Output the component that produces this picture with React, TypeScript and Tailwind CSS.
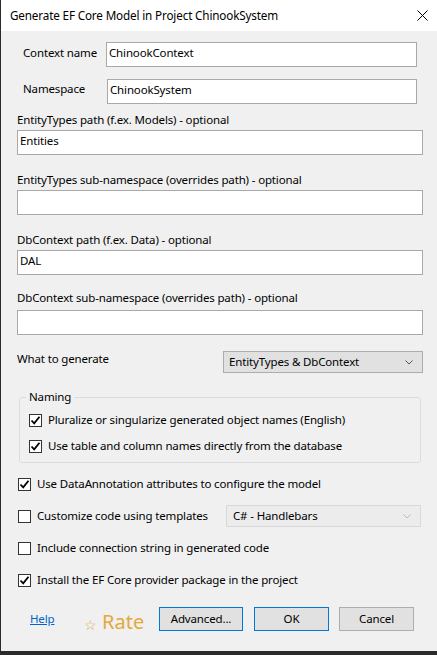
const Check = () => (
  <svg width="11" height="11" viewBox="0 0 11 11" className="block">
    <path d="M1.5 5.5 L4.2 8.3 L9.5 1.8" fill="none" stroke="#000" strokeWidth="1.8" />
  </svg>
);

const CheckBox = ({ checked }: { checked?: boolean }) => (
  <div className="w-[13px] h-[13px] border border-[#333] bg-white flex items-center justify-center shrink-0">
    {checked && <Check />}
  </div>
);

const Chevron = ({ color }: { color: string }) => (
  <svg width="8" height="5" viewBox="0 0 8 5">
    <path d="M0.5 0.5 L4 4 L7.5 0.5" fill="none" stroke={color} strokeWidth="1" />
  </svg>
);

const TextBox = ({ value, className }: { value?: string; className?: string }) => (
  <div className={`h-[25px] bg-white border border-[#a9a9a9] px-[2px] pt-[1px] leading-[17px] ${className ?? ''}`}>
    {value}
  </div>
);

const App = () => {
  return (
    <div
      className="w-[437px] h-[655px] bg-[#2b2b2b] text-[11.5px] tracking-[-0.15px] text-black"
      style={{ fontFamily: '"Noto Sans", "Open Sans", sans-serif' }}
    >
      <div className="ml-[1px] w-[436px] h-[651px] bg-[#f0f0f0] flex flex-col">
        {/* title bar */}
        <div className="h-[31px] bg-white flex items-center justify-between pl-[9px] pr-[9px] shrink-0">
          <span className="text-[11.7px]">Generate EF Core Model in Project ChinookSystem</span>
          <svg width="11" height="11" viewBox="0 0 11 11">
            <path d="M0.5 0.5 L10.5 10.5 M10.5 0.5 L0.5 10.5" stroke="#000" strokeWidth="1" />
          </svg>
        </div>

        <div className="flex flex-col pl-[16px] pr-[13px]">
          <div className="flex mt-[11px] items-start">
            <span className="w-[89px] pl-[6px] mt-[2px]">Context name</span>
            <TextBox value="ChinookContext" className="w-[311px]" />
          </div>
          <div className="flex mt-[12px] items-start">
            <span className="w-[90px] pl-[6px] mt-[1px]">Namespace</span>
            <TextBox value="ChinookSystem" className="w-[310px]" />
          </div>

          <span className="mt-[8px] h-[16px] leading-[16px]">EntityTypes path (f.ex. Models) - optional</span>
          <TextBox value="Entities" className="mt-[2px] w-[406px]" />

          <span className="mt-[17px] h-[16px] leading-[16px]">EntityTypes sub-namespace (overrides path) - optional</span>
          <TextBox className="mt-[2px] w-[406px]" />

          <span className="mt-[17px] h-[16px] leading-[16px]">DbContext path (f.ex. Data) - optional</span>
          <TextBox value="DAL" className="mt-[2px] w-[406px]" />

          <span className="mt-[15px] h-[16px] leading-[16px]">DbContext sub-namespace (overrides path) - optional</span>
          <TextBox className="mt-[4px] w-[406px]" />

          <div className="flex mt-[16px] items-start">
            <span className="w-[206px] leading-[16px]">What to generate</span>
            <div className="w-[200px] h-[22px] bg-[#e1e1e1] border border-[#adadad] flex items-center justify-between pl-[5px] pr-[9px]">
              <span>EntityTypes &amp; DbContext</span>
              <Chevron color="#555" />
            </div>
          </div>

          <fieldset className="mt-[17px] ml-[2px] w-[402px] h-[73px] border border-[#dcdcdc] rounded-[3px] pl-[9px]">
            <legend className="px-[3px] -ml-[3px] leading-[14px]">Naming</legend>
            <div className="flex items-center h-[16px] mt-[8px] gap-[6px]">
              <CheckBox checked />
              <span>Pluralize or singularize generated object names (English)</span>
            </div>
            <div className="flex items-center h-[16px] mt-[10px] gap-[6px]">
              <CheckBox checked />
              <span>Use table and column names directly from the database</span>
            </div>
          </fieldset>

          <div className="flex items-center h-[22px] mt-[10px] gap-[6px] pl-[1px]">
            <CheckBox checked />
            <span>Use DataAnnotation attributes to configure the model</span>
          </div>
          <div className="flex items-center h-[22px] mt-[10px] pl-[1px]">
            <CheckBox />
            <span className="ml-[6px] w-[189px]">Customize code using templates</span>
            <div className="w-[195px] h-[22px] bg-[#ececec] border border-[#d9d9d9] flex items-center justify-between pl-[6px] pr-[9px]">
              <span>C# - Handlebars</span>
              <Chevron color="#bbb" />
            </div>
          </div>
          <div className="flex items-center h-[22px] mt-[10px] gap-[6px] pl-[1px]">
            <CheckBox />
            <span>Include connection string in generated code</span>
          </div>
          <div className="flex items-center h-[22px] mt-[10px] gap-[6px] pl-[1px]">
            <CheckBox checked />
            <span>Install the EF Core provider package in the project</span>
          </div>

          <div className="flex items-center h-[24px] mt-[16px]">
            <a className="ml-[13px] w-[54px] text-[#0066cc] underline">Help</a>
            <span className="text-[#e3a93c] flex items-end h-[24px] mt-[8px] w-[75px] tracking-normal">
              <span className="text-[14px] leading-[20px] mr-[5px]">☆</span>
              <span className="text-[20px] leading-[26px]">Rate</span>
            </span>
            <button className="w-[84px] h-[24px] bg-[#e1e1e1] border border-[#0078d7]">Advanced...</button>
            <button className="ml-[11px] w-[75px] h-[24px] bg-[#e1e1e1] border border-[#0078d7]">OK</button>
            <button className="ml-[10px] w-[75px] h-[24px] bg-[#e1e1e1] border border-[#adadad]">Cancel</button>
          </div>
        </div>
      </div>
    </div>
  );
};

export default App;
